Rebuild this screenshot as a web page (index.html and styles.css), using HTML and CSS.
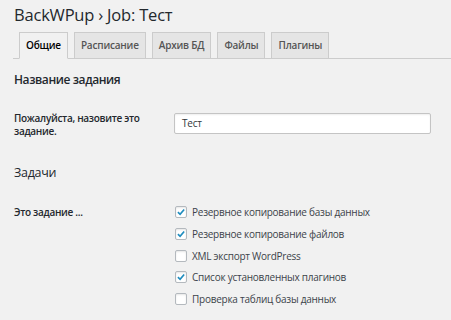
FILE: index.html
```html
<!DOCTYPE html>
<html lang="ru">
<head>
<meta charset="utf-8">
<title>BackWPup</title>
<link rel="stylesheet" href="styles.css">
</head>
<body>
<div class="wrap">
  <h1 class="title">BackWPup › Job: Тест</h1>
  <nav class="tabs">
    <span class="tab active">Общие</span>
    <span class="tab">Расписание</span>
    <span class="tab">Архив БД</span>
    <span class="tab">Файлы</span>
    <span class="tab">Плагины</span>
  </nav>
  <h2 class="section">Название задания</h2>
  <div class="row">
    <div class="label">Пожалуйста, назовите это задание.</div>
    <div class="field name"><div class="input">Тест</div></div>
  </div>
  <h2 class="section light">Задачи</h2>
  <div class="row tasks">
    <div class="label">Это задание ...</div>
    <div class="field list">
      <div class="check"><span class="box on"><svg viewBox="0 0 12 12"><path d="M2.3 6.2 L4.9 8.8 L9.8 2.9" /></svg></span>Резервное копирование базы данных</div>
      <div class="check"><span class="box on"><svg viewBox="0 0 12 12"><path d="M2.3 6.2 L4.9 8.8 L9.8 2.9" /></svg></span>Резервное копирование файлов</div>
      <div class="check"><span class="box"></span>XML экспорт WordPress</div>
      <div class="check"><span class="box on"><svg viewBox="0 0 12 12"><path d="M2.3 6.2 L4.9 8.8 L9.8 2.9" /></svg></span>Список установленных плагинов</div>
      <div class="check"><span class="box"></span>Проверка таблиц базы данных</div>
    </div>
  </div>
</div>
</body>
</html>
```
FILE: styles.css
```css
html, body {
  margin: 0;
  padding: 0;
}
body {
  background: #f1f1f1;
  color: #23282d;
  font-family: "Open Sans", "Noto Sans", sans-serif;
  width: 451px;
  height: 320px;
  overflow: hidden;
}
.wrap {
  padding: 0 0 0 13px;
}
.title {
  margin: 0;
  padding: 2px 0 0 1px;
  font-size: 16.5px;
  font-weight: 400;
  line-height: 25px;
  letter-spacing: -0.2px;
}
.tabs {
  display: flex;
  gap: 6px;
  margin-top: 5px;
  padding-left: 6px;
  border-bottom: 1px solid #cccccc;
  height: 26px;
}
.tab {
  box-sizing: border-box;
  height: 27px;
  padding: 0 6px;
  border: 1px solid #cccccc;
  background: #e5e5e5;
  color: #555555;
  font-size: 10px;
  font-weight: 600;
  line-height: 25px;
  letter-spacing: -0.2px;
}
.tab.active {
  background: #f1f1f1;
  border-bottom-color: #f1f1f1;
  color: #000000;
}
.section {
  margin: 12px 0 0 1px;
  font-size: 12px;
  font-weight: 600;
  line-height: 18px;
  letter-spacing: -0.4px;
}
.section.light {
  font-weight: 400;
  font-size: 12.5px;
  letter-spacing: -0.3px;
  margin-top: 26px;
}
.row {
  display: flex;
  margin-top: 21px;
}
.label {
  width: 160px;
  padding-left: 1px;
  font-size: 10px;
  font-weight: 600;
  line-height: 13px;
  letter-spacing: -0.3px;
  padding-top: 2px;
}
.field {
  flex: 0 0 auto;
}
.field.name {
  padding-top: 3px;
}
.input {
  box-sizing: border-box;
  width: 257px;
  height: 21px;
  border: 1px solid #c4c4c4;
  border-radius: 2px;
  background: #ffffff;
  box-shadow: inset 0 1px 2px rgba(0,0,0,0.07);
  padding-left: 7px;
  font-size: 10px;
  letter-spacing: -0.2px;
  line-height: 19px;
  color: #32373c;
}
.tasks {
  margin-top: 24px;
}
.tasks .label {
  padding-top: 0;
}
.list {
  display: flex;
  flex-direction: column;
  gap: 9.75px;
  margin-left: 1px;
}
.check {
  display: flex;
  align-items: center;
  height: 12px;
  font-size: 10px;
  letter-spacing: -0.25px;
  color: #3c434a;
}
.box {
  box-sizing: border-box;
  width: 12px;
  height: 12px;
  border: 1px solid #b4b9be;
  border-radius: 2px;
  background: #ffffff;
  box-shadow: inset 0 1px 2px rgba(0,0,0,0.1);
  margin-right: 5px;
  display: flex;
}
.box svg {
  width: 10px;
  height: 10px;
}
.box path {
  fill: none;
  stroke: #1e8cbe;
  stroke-width: 2;
}
```
